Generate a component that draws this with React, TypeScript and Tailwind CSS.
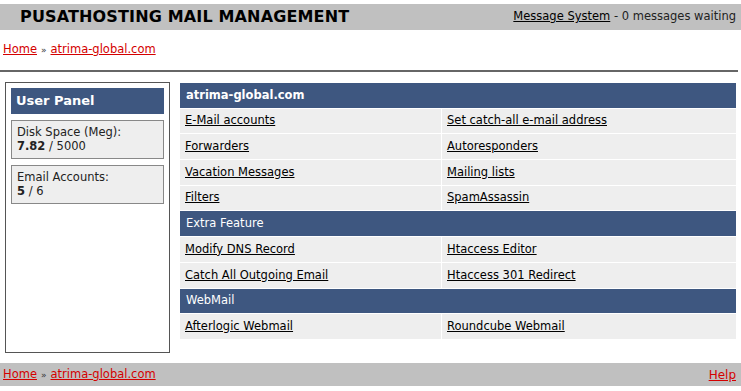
const linkCls = "text-black underline";

type Row = [string, string];

const sections: { title: string; bold?: boolean; rows: Row[] }[] = [
  {
    title: "atrima-global.com",
    bold: true,
    rows: [
      ["E-Mail accounts", "Set catch-all e-mail address"],
      ["Forwarders", "Autoresponders"],
      ["Vacation Messages", "Mailing lists"],
      ["Filters", "SpamAssassin"],
    ],
  },
  {
    title: "Extra Feature",
    rows: [
      ["Modify DNS Record", "Htaccess Editor"],
      ["Catch All Outgoing Email", "Htaccess 301 Redirect"],
    ],
  },
  {
    title: "WebMail",
    rows: [["Afterlogic Webmail", "Roundcube Webmail"]],
  },
];

function Crumbs() {
  return (
    <span>
      <a href="#" className="text-[#d40000] underline">
        Home
      </a>
      <span className="text-[9px] text-[#333] mx-[4px]">»</span>
      <a href="#" className="text-[#d40000] underline">
        atrima-global.com
      </a>
    </span>
  );
}

export default function App() {
  return (
    <div
      className="w-[741px] h-[391px] bg-white text-[11.5px] text-[#222] overflow-hidden"
      style={{ fontFamily: '"DejaVu Sans", Verdana, sans-serif' }}
    >
      {/* header */}
      <div className="mt-[4px] h-[26px] bg-[#c0c0c0] flex items-center justify-between pl-[20px] pr-[5px]">
        <h1 className="text-[16px] font-bold text-black tracking-[0.15px]">
          PUSATHOSTING MAIL MANAGEMENT
        </h1>
        <div>
          <a href="#" className={linkCls}>
            Message System
          </a>{" "}
          - 0 messages waiting
        </div>
      </div>

      <div className="h-[40px] flex items-center pl-[3px]">
        <Crumbs />
      </div>
      <div className="w-[738px] border-t-2 border-[#666]" />

      <div className="flex items-start mt-[10px] ml-[5px] gap-[10px] h-[281px]">
        {/* sidebar */}
        <div className="w-[165px] h-[271px] border border-[#555] px-[5px] pt-[5px] flex flex-col gap-[6px]">
          <div className="h-[26px] bg-[#3e5780] text-white font-bold text-[13px] flex items-center pl-[5px]">
            User Panel
          </div>
          <div className="h-[39px] bg-[#eeeeee] border border-[#888] px-[5px] pt-[4px] leading-[14px]">
            Disk Space (Meg):
            <br />
            <b>7.82</b> / 5000
          </div>
          <div className="h-[39px] bg-[#eeeeee] border border-[#888] px-[5px] pt-[4px] leading-[14px]">
            Email Accounts:
            <br />
            <b>5</b> / 6
          </div>
        </div>

        {/* main table */}
        <div className="w-[556px] mt-[1px] grid grid-cols-[261px_1fr] gap-[1px] bg-white">
          {sections.map((s) => (
            <div key={s.title} className="contents">
              <div
                className={`col-span-2 h-[24.7px] bg-[#3e5780] text-white flex items-center pl-[6px] ${
                  s.bold ? "font-bold" : ""
                }`}
              >
                {s.title}
              </div>
              {s.rows.map(([a, b]) => (
                <div key={a} className="contents">
                  <div className="h-[24.7px] bg-[#eeeeee] flex items-center pl-[5px]">
                    <a href="#" className={linkCls}>
                      {a}
                    </a>
                  </div>
                  <div className="h-[24.7px] bg-[#eeeeee] flex items-center pl-[5px]">
                    <a href="#" className={linkCls}>
                      {b}
                    </a>
                  </div>
                </div>
              ))}
            </div>
          ))}
        </div>
      </div>

      {/* footer */}
      <div className="h-[23px] bg-[#c0c0c0] flex items-center justify-between pl-[3px] pr-[5px]">
        <Crumbs />
        <a href="#" className="text-[#d40000] underline text-[12px]">
          Help
        </a>
      </div>
    </div>
  );
}
